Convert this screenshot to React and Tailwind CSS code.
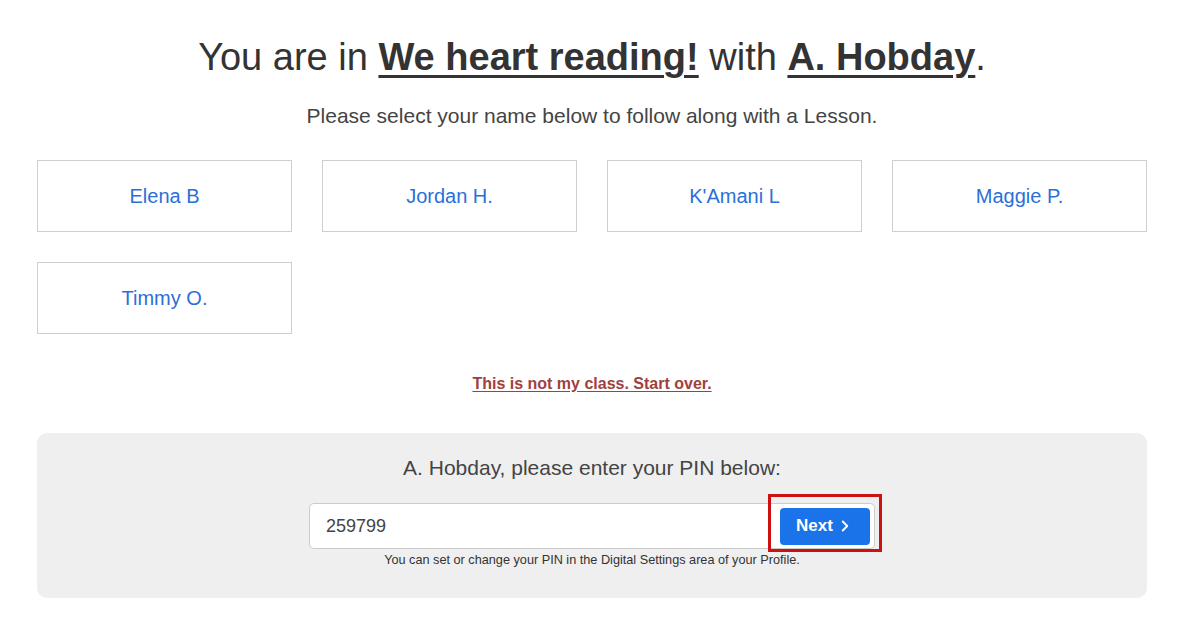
import { ChevronRight } from "lucide-react";

const students = ["Elena B", "Jordan H.", "K'Amani L", "Maggie P.", "Timmy O."];

export default function App() {
  return (
    <div className="min-h-screen bg-white font-['Liberation_Sans',Arial,sans-serif] text-[#333]">
      <div className="ml-[37px] w-[1110px] pt-[32px]">
        <h1 className="text-center text-[38px] leading-[50px] text-[#333]">
          You are in{" "}
          <a href="#" className="font-bold underline decoration-[3px] underline-offset-[5px]">
            We heart reading!
          </a>{" "}
          with{" "}
          <a href="#" className="font-bold underline decoration-[3px] underline-offset-[5px]">
            A. Hobday
          </a>
          .
        </h1>
        <p className="mt-[20px] text-center text-[21px] leading-[28px] text-[#444]">
          Please select your name below to follow along with a Lesson.
        </p>

        <div className="mt-[30px] grid grid-cols-4 gap-[30px]">
          {students.map((s) => (
            <button
              key={s}
              className="flex h-[72px] items-center justify-center border border-[#cfcfcf] bg-white text-[20px] text-[#2b70d8]"
            >
              {s}
            </button>
          ))}
        </div>

        <div className="mt-[38px] text-center leading-[24px]">
          <a href="#" className="text-[16px] font-bold text-[#a0413e] underline underline-offset-2">
            This is not my class. Start over.
          </a>
        </div>

        <div className="mt-[37px] flex h-[165px] flex-col items-center rounded-[10px] bg-[#efefef] pt-[21px]">
          <p className="text-[21px] leading-[28px] text-[#444]">A. Hobday, please enter your PIN below:</p>
          <div className="relative mt-[21px] flex h-[46px] w-[566px] items-center rounded-[5px] border border-[#ccc] bg-white pl-[16px] pr-[4px]">
            <input
              defaultValue="259799"
              className="h-full flex-1 bg-transparent text-[18px] text-[#444] outline-none"
            />
            <button className="flex h-[37px] w-[90px] items-center justify-center gap-[3px] rounded-[4px] bg-[#1a73e8] text-[17px] font-bold text-white">
              Next
              <ChevronRight className="h-[18px] w-[18px]" strokeWidth={2.5} />
            </button>
            <div className="pointer-events-none absolute right-[-8px] top-[-10px] h-[58px] w-[114px] border-[3px] border-[#cc1111]" />
          </div>
          <p className="mt-[2px] text-[12.7px] text-[#333]">
            You can set or change your PIN in the Digital Settings area of your Profile.
          </p>
        </div>
      </div>
    </div>
  );
}
